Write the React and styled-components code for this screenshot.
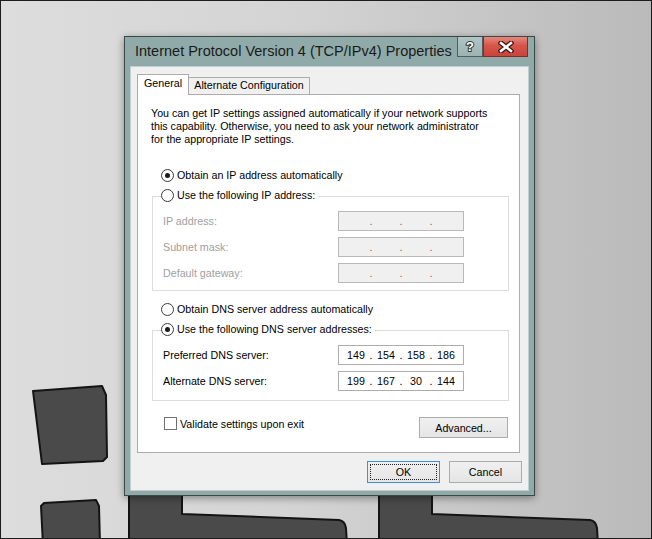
import React from 'react';
import styled, { createGlobalStyle } from 'styled-components';

const GlobalStyle = createGlobalStyle`
  html, body {
    margin: 0;
    padding: 0;
  }
  body {
    font-family: "Liberation Sans", Arial, sans-serif;
  }
`;

const Desktop = styled.div`
  position: relative;
  width: 652px;
  height: 539px;
  box-sizing: border-box;
  border: 1px solid #1c1c1c;
  overflow: hidden;
  background: linear-gradient(90deg, #dddddd 0%, #d4d4d4 45%, #bababa 100%);
  padding: 35px 0 0 123px;
`;

const Backdrop = styled.svg`
  position: absolute;
  left: -1px;
  top: -1px;
  width: 652px;
  height: 539px;
`;

const Window = styled.div`
  position: relative;
  z-index: 1;
  width: 411px;
  height: 460px;
  box-sizing: border-box;
  border: 1px solid #3b4848;
  background: #8faaa8;
  box-shadow: 0 2px 8px rgba(0, 0, 0, 0.4);
  display: flex;
  flex-direction: column;
  padding: 0 5px 4px 5px;
`;

const TitleBar = styled.div`
  height: 29px;
  display: flex;
  align-items: flex-start;
  flex: none;
`;

const Title = styled.div`
  flex: 1;
  font-size: 14.5px;
  line-height: 29px;
  padding-left: 5px;
  color: #1a1a1a;
  white-space: nowrap;
`;

const HelpButton = styled.div`
  width: 26px;
  height: 20px;
  box-sizing: border-box;
  border: 1px solid #4d5f5e;
  border-top: none;
  background: linear-gradient(#b2c5c4, #9cb3b1);
  display: flex;
  align-items: center;
  justify-content: center;
  color: #fff;
  font-weight: bold;
  font-size: 13px;
  -webkit-text-stroke: 2px #2d3a3a;
  paint-order: stroke fill;
`;

const CloseButton = styled.div`
  width: 45px;
  height: 20px;
  margin-right: 1px;
  box-sizing: border-box;
  border: 1px solid #7e2d27;
  border-top: none;
  background: linear-gradient(#e8877c, #d6554a 45%, #c9443a);
  display: flex;
  align-items: center;
  justify-content: center;
`;

const Client = styled.div`
  flex: 1;
  background: #f0f0f0;
  border: 1px solid #bdd0ce;
  display: flex;
  flex-direction: column;
  padding: 7px 6px 0 6px;
  font-size: 10.7px;
  color: #000;
`;

const TabStrip = styled.div`
  position: relative;
  z-index: 1;
  height: 21px;
  margin-bottom: -1px;
  display: flex;
  align-items: flex-end;
`;

const Tab = styled.div`
  box-sizing: border-box;
  height: ${p => (p.$active ? 21 : 17)}px;
  width: ${p => p.$w}px;
  margin-left: ${p => (p.$active ? 0 : -1)}px;
  margin-bottom: ${p => (p.$active ? 0 : 1)}px;
  border: 1px solid #acacac;
  border-bottom: none;
  background: ${p => (p.$active ? '#fff' : '#f0f0f0')};
  text-align: center;
  line-height: ${p => (p.$active ? 17 : 15)}px;
`;

const Panel = styled.div`
  box-sizing: border-box;
  height: 359px;
  margin-right: 2px;
  background: #fff;
  border: 1px solid #acacac;
  padding-top: 12px;
  display: flex;
  flex-direction: column;
`;

const Description = styled.p`
  margin: 0 0 0 13px;
  line-height: 13px;
  white-space: pre-line;
`;

const OptionRow = styled.label`
  display: flex;
  align-items: center;
  gap: 3px;
  height: 16px;
  margin: ${p => p.$mt || 0}px 0 0 23px;
  white-space: nowrap;
`;

const Radio = styled.span`
  width: 13px;
  height: 13px;
  box-sizing: border-box;
  border-radius: 50%;
  border: 1px solid #3a3a3a;
  background: #fff;
  display: flex;
  align-items: center;
  justify-content: center;
  flex: none;

  &::after {
    content: '';
    display: ${p => (p.$checked ? 'block' : 'none')};
    width: 5px;
    height: 5px;
    border-radius: 50%;
    background: #1a1a1a;
  }
`;

const Group = styled.fieldset`
  margin: 4px 10px 0 14px;
  padding: 6px 0 ${p => p.$pb}px 10px;
  border: 1px solid #dcdcdc;
  min-width: 0;
  display: grid;
  grid-template-columns: 175px 126px;
  row-gap: 6px;
  align-items: center;
`;

const Legend = styled.legend`
  display: flex;
  align-items: center;
  gap: 3px;
  height: 16px;
  padding: 0 3px 2px 0;
  margin-left: -2px;
  white-space: nowrap;
`;

const FieldLabel = styled.span`
  color: ${p => (p.$disabled ? '#a0a0a0' : '#000')};
`;

const IpBox = styled.div`
  width: 126px;
  height: 20px;
  box-sizing: border-box;
  border: 1px solid ${p => (p.$disabled ? '#b9b9b9' : '#acacac')};
  background: ${p => (p.$disabled ? '#f0f0f0' : '#fff')};
  display: flex;
  align-items: center;
  padding-left: 4px;
`;

const Octet = styled.span`
  width: 26px;
  text-align: center;
`;

const Dot = styled.span`
  width: 4px;
  text-align: center;
  color: ${p => (p.$disabled ? '#6d6d6d' : '#000')};
`;

const BottomRow = styled.div`
  display: flex;
  justify-content: space-between;
  align-items: flex-start;
  margin: 16px 11px 0 26px;
`;

const CheckRow = styled.label`
  display: flex;
  align-items: center;
  gap: 3px;
  height: 13px;
`;

const Checkbox = styled.span`
  width: 13px;
  height: 13px;
  box-sizing: border-box;
  border: 1px solid #707070;
  background: #fff;
`;

const Button = styled.button`
  font-family: inherit;
  font-size: 10.7px;
  color: #000;
  width: ${p => p.$w}px;
  height: ${p => p.$h}px;
  padding: 0;
  box-sizing: border-box;
  border: 1px solid ${p => (p.$default ? '#3d8ee0' : '#acacac')};
  border-radius: 0;
  background: linear-gradient(#f0f0f0, #e5e5e5);
  outline: ${p => (p.$default ? '1px dotted #222' : 'none')};
  outline-offset: -4px;
`;

const ButtonRow = styled.div`
  display: flex;
  justify-content: flex-end;
  gap: 9px;
  margin-top: 8px;
  padding-right: 0;
`;

function IpField({ values, disabled }) {
  const parts = values || ['', '', '', ''];
  return (
    <IpBox $disabled={disabled}>
      {parts.map((v, i) => (
        <React.Fragment key={i}>
          {i > 0 && <Dot $disabled={disabled}>.</Dot>}
          <Octet>{v}</Octet>
        </React.Fragment>
      ))}
    </IpBox>
  );
}

export default function App() {
  return (
    <>
      <GlobalStyle />
      <Desktop>
        <Backdrop viewBox="0 0 652 539">
          <g fill="#4a4a4a" stroke="#141414" strokeWidth="2" strokeLinejoin="round">
            <path d="M33,391 L102,386 L106,395 L107,457 L103,461 L42,464 Z" />
            <path d="M41,506 L44,503 L96,500 L99,506 L100,545 L43,545 Z" />
            <path d="M129,470 L182,470 L182,514 L339,520 Q345,521 346,528 L347,545 L129,545 Z" />
            <path d="M379,470 L432,470 L432,514 L590,520 Q596,521 597,528 L598,545 L379,545 Z" />
          </g>
        </Backdrop>
        <Window>
          <TitleBar>
            <Title>Internet Protocol Version 4 (TCP/IPv4) Properties</Title>
            <HelpButton>?</HelpButton>
            <CloseButton>
              <svg width="16" height="12" viewBox="0 0 16 12">
                <path d="M3,2 L13,10 M13,2 L3,10" stroke="#3a1512" strokeWidth="5" strokeLinecap="square" />
                <path d="M3,2 L13,10 M13,2 L3,10" stroke="#fff" strokeWidth="2.6" strokeLinecap="square" />
              </svg>
            </CloseButton>
          </TitleBar>
          <Client>
            <TabStrip>
              <Tab $active $w={52}>General</Tab>
              <Tab $w={122}>Alternate Configuration</Tab>
            </TabStrip>
            <Panel>
              <Description>
                {'You can get IP settings assigned automatically if your network supports\nthis capability. Otherwise, you need to ask your network administrator\nfor the appropriate IP settings.'}
              </Description>
              <OptionRow $mt={21}>
                <Radio $checked />
                Obtain an IP address automatically
              </OptionRow>
              <Group $pb={7}>
                <Legend>
                  <Radio />
                  Use the following IP address:
                </Legend>
                <FieldLabel $disabled>IP address:</FieldLabel>
                <IpField disabled />
                <FieldLabel $disabled>Subnet mask:</FieldLabel>
                <IpField disabled />
                <FieldLabel $disabled>Default gateway:</FieldLabel>
                <IpField disabled />
              </Group>
              <OptionRow $mt={10}>
                <Radio />
                Obtain DNS server address automatically
              </OptionRow>
              <Group $pb={9}>
                <Legend>
                  <Radio $checked />
                  Use the following DNS server addresses:
                </Legend>
                <FieldLabel>Preferred DNS server:</FieldLabel>
                <IpField values={['149', '154', '158', '186']} />
                <FieldLabel>Alternate DNS server:</FieldLabel>
                <IpField values={['199', '167', '30', '144']} />
              </Group>
              <BottomRow>
                <CheckRow>
                  <Checkbox />
                  Validate settings upon exit
                </CheckRow>
                <Button $w={89} $h={21}>Advanced...</Button>
              </BottomRow>
            </Panel>
            <ButtonRow>
              <Button $default $w={73} $h={22}>OK</Button>
              <Button $w={73} $h={22}>Cancel</Button>
            </ButtonRow>
          </Client>
        </Window>
      </Desktop>
    </>
  );
}
